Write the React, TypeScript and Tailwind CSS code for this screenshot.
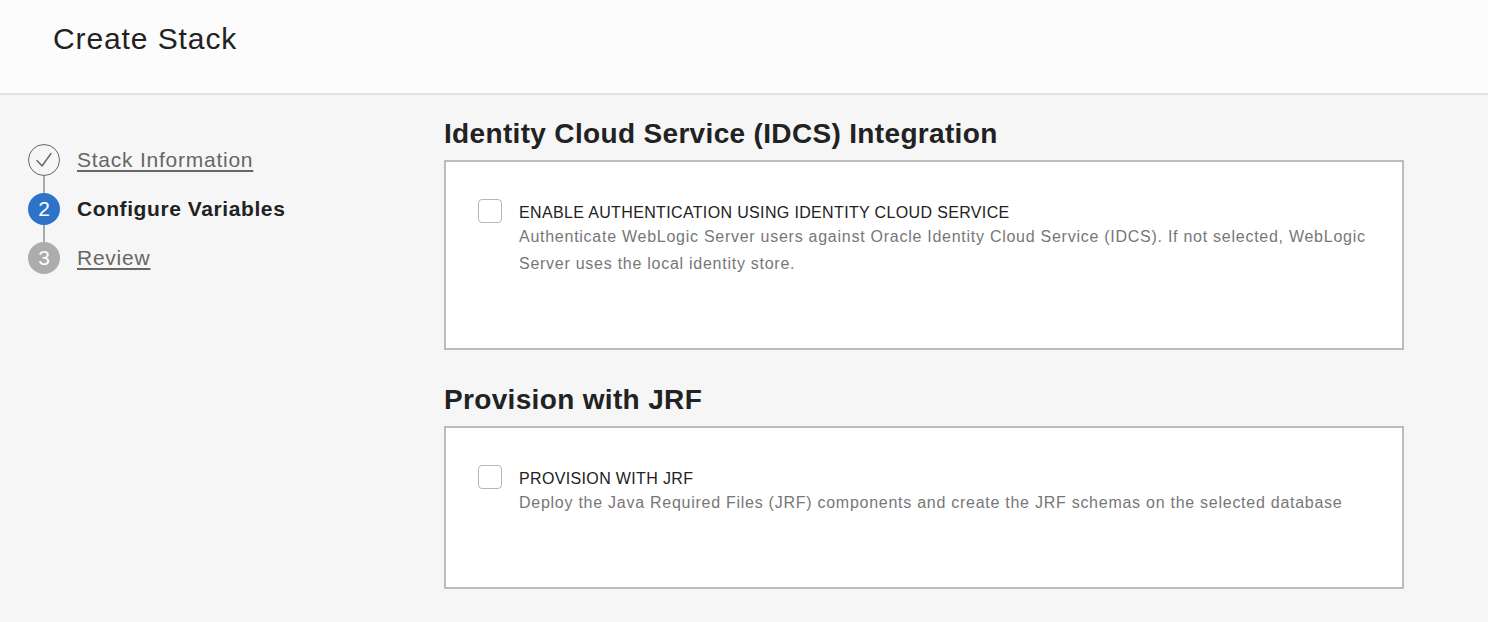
const font = "font-['Liberation_Sans',Arial,sans-serif]";

const steps = [
    { label: "Stack Information", state: "done" },
    { label: "Configure Variables", state: "current" },
    { label: "Review", state: "todo" },
];

const sections = [
    {
        title: "Identity Cloud Service (IDCS) Integration",
        label: "ENABLE AUTHENTICATION USING IDENTITY CLOUD SERVICE",
        description:
            "Authenticate WebLogic Server users against Oracle Identity Cloud Service (IDCS). If not selected, WebLogic Server uses the local identity store.",
    },
    {
        title: "Provision with JRF",
        label: "PROVISION WITH JRF",
        description:
            "Deploy the Java Required Files (JRF) components and create the JRF schemas on the selected database",
    },
];

const StepMarker = ({ index, state }: { index: number; state: string }) => {
    if (state === "done") {
        return (
            <div className="w-8 h-8 rounded-full border-[1.5px] border-[#666] flex items-center justify-center">
                <svg width="22" height="22" viewBox="0 0 22 22" fill="none">
                    <path d="M4 11.5 L9 17 L18 4.5" stroke="#666" strokeWidth="1.4" strokeLinecap="round" strokeLinejoin="round" />
                </svg>
            </div>
        );
    }
    return (
        <div
            className={
                "w-8 h-8 rounded-full flex items-center justify-center text-white text-[21px] " +
                (state === "current" ? "bg-[#2d73c8]" : "bg-[#acacac]")
            }
        >
            {index + 1}
        </div>
    );
};

const App = (): JSX.Element => {
    return (
        <div className={`${font} w-[1488px] h-[622px] bg-[#f6f6f6] overflow-hidden`}>
            {/* Page header */}
            <header className="h-[95px] bg-[#fcfcfc] border-b-2 border-[#e4e4e4] flex items-center pl-[53px] pb-[16px]">
                <h1 className="text-[30px] tracking-[0.03em] text-[#222] font-normal">Create Stack</h1>
            </header>

            <div className="flex">
                {/* Stepper */}
                <nav className="w-[444px] shrink-0 pl-[28px] pt-[49px]">
                    {steps.map((step, idx) => (
                        <div key={step.label} className="flex">
                            <div className="flex flex-col items-center w-8">
                                <StepMarker index={idx} state={step.state} />
                                {idx < steps.length - 1 && <div className="w-[2px] h-[17px] bg-[#aaa]" />}
                            </div>
                            <div className="ml-[17px] h-8 flex items-center">
                                {step.state === "current" ? (
                                    <span className="text-[21px] tracking-[0.028em] font-bold text-[#222]">{step.label}</span>
                                ) : (
                                    <a className="text-[21px] tracking-[0.036em] text-[#666] underline underline-offset-[3px] decoration-[1.5px]">
                                        {step.label}
                                    </a>
                                )}
                            </div>
                        </div>
                    ))}
                </nav>

                {/* Form sections */}
                <main className="w-[960px] pt-[22px]">
                    {sections.map((section, idx) => (
                        <section key={section.title} className={idx > 0 ? "mt-[33px]" : ""}>
                            <h2 className="text-[28px] leading-[34px] tracking-[0.012em] font-bold text-[#222]">{section.title}</h2>
                            <div className="mt-[9px] bg-white border-2 border-[#b9bdc1] pl-[32px] pr-[36px] pt-[37px] pb-[71px] flex">
                                <div className="w-6 h-6 shrink-0 rounded-[4px] border-[1.5px] border-[#b4b8bc] bg-white" />
                                <div className="ml-[17px] mt-[2px]">
                                    <div className="text-[16px] leading-[24px] tracking-[0.022em] text-[#222]">{section.label}</div>
                                    <p className="-mt-[2px] text-[16px] leading-[27px] tracking-[0.046em] text-[#777]">{section.description}</p>
                                </div>
                            </div>
                        </section>
                    ))}
                </main>
            </div>
        </div>
    );
};

export default App;
